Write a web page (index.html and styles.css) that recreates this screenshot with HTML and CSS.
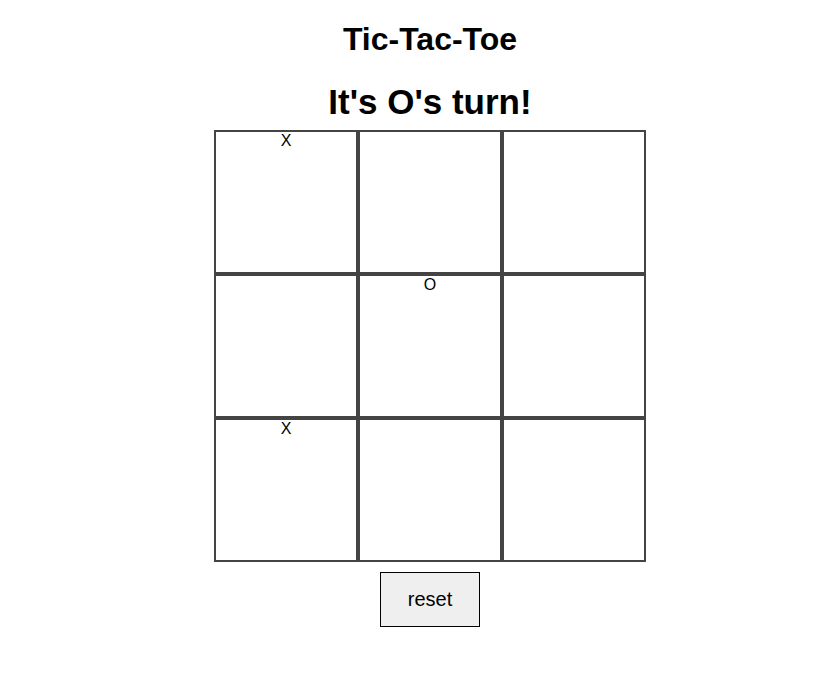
FILE: index.html
```html
<!DOCTYPE html>
<html lang="en">
<head>
<meta charset="utf-8">
<title>Tic-Tac-Toe</title>
<link rel="stylesheet" href="styles.css">
</head>
<body>
<main class="game">
  <h1 class="title">Tic-Tac-Toe</h1>
  <h2 class="status">It's O's turn!</h2>
  <div class="board">
    <div class="cell">X</div>
    <div class="cell"></div>
    <div class="cell"></div>
    <div class="cell"></div>
    <div class="cell">O</div>
    <div class="cell"></div>
    <div class="cell">X</div>
    <div class="cell"></div>
    <div class="cell"></div>
  </div>
  <button class="reset" type="button">reset</button>
</main>
</body>
</html>
```

FILE: styles.css
```css
html, body {
  margin: 0;
  padding: 0;
  background: #fff;
}
body {
  padding: 8px 8px 8px 38px;
  font-family: "Liberation Sans", Arial, sans-serif;
  color: #000;
}
.game {
  display: flex;
  flex-direction: column;
  align-items: center;
}
.title {
  margin: 15px 0 0;
  font-size: 32px;
  line-height: 32px;
  font-weight: bold;
}
.status {
  margin: 29px 0 0;
  font-size: 35px;
  line-height: 35px;
  font-weight: bold;
}
.board {
  margin-top: 11px;
  display: grid;
  grid-template-columns: repeat(3, 144px);
  grid-template-rows: repeat(3, 144px);
}
.cell {
  border: 2px solid #444;
  font-size: 16px;
  text-align: center;
  line-height: 18px;
}
.reset {
  margin-top: 10px;
  width: 100px;
  height: 55px;
  border: 1px solid #000;
  background: #efefef;
  font-family: "Liberation Sans", Arial, sans-serif;
  font-size: 20px;
  color: #000;
  padding: 0;
}
```
